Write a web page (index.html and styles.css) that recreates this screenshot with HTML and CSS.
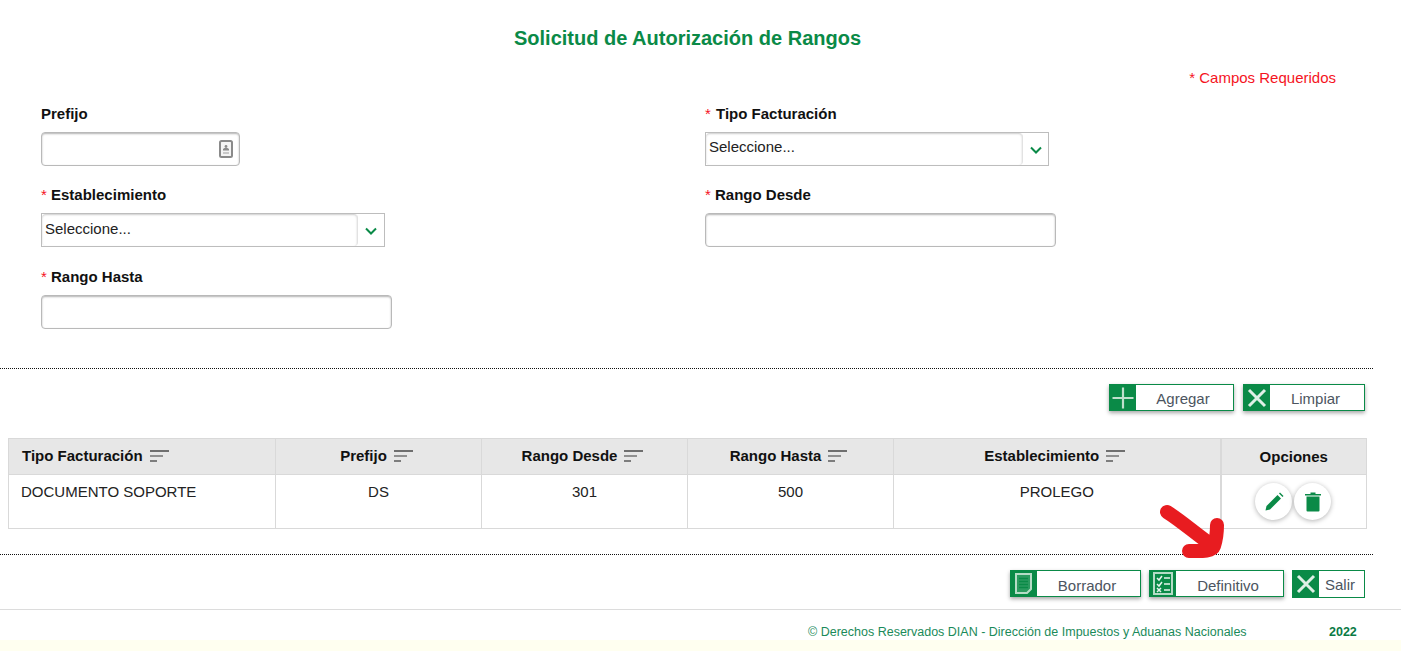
FILE: index.html
```html
<!DOCTYPE html>
<html lang="es">
<head>
<meta charset="utf-8">
<title>Solicitud de Autorización de Rangos</title>
<link rel="stylesheet" href="styles.css">
</head>
<body>
<div class="page">
  <main class="main">
    <h1 class="title">Solicitud de Autorización de Rangos</h1>
    <p class="required">* Campos Requeridos</p>
    <form class="form">
      <div class="col">
        <div class="field">
          <label class="label">Prefijo</label>
          <div class="input input-short">
            <svg class="id-icon" viewBox="0 0 14 18" width="14" height="18"><rect x="1" y="1" width="12" height="16" rx="1.5" fill="#f4f4f4" stroke="#8a8a8a" stroke-width="2"/><circle cx="7" cy="6.500" r="1.400" fill="#8a8a8a"/><path d="M4 10.500h6v-1.500l-1.500-1h-3l-1.500 1z" fill="#8a8a8a"/><path d="M4 13h6" stroke="#bbb" stroke-width="1.500"/></svg>
          </div>
        </div>
        <div class="field field-select">
          <label class="label"><span class="star">*</span> Establecimiento</label>
          <div class="select select-low">
            <span class="select-value">Seleccione...</span>
            <svg class="chev" viewBox="0 0 12 8" width="12" height="8"><path d="M1 1.500l5 5 5-5" fill="none" stroke="#0a8a47" stroke-width="2"/></svg>
          </div>
        </div>
        <div class="field">
          <label class="label"><span class="star">*</span> Rango Hasta</label>
          <div class="input input-wide"></div>
        </div>
      </div>
      <div class="col">
        <div class="field">
          <label class="label"><span class="star star-wide">*</span> Tipo Facturación</label>
          <div class="select">
            <span class="select-value">Seleccione...</span>
            <svg class="chev" viewBox="0 0 12 8" width="12" height="8"><path d="M1 1.500l5 5 5-5" fill="none" stroke="#0a8a47" stroke-width="2"/></svg>
          </div>
        </div>
        <div class="field">
          <label class="label"><span class="star">*</span> Rango Desde</label>
          <div class="input input-wide"></div>
        </div>
      </div>
    </form>

    <div class="rule rule-top"></div>

    <div class="actions actions-top">
      <button class="btn btn-agregar" type="button">
        <span class="btn-icon"><svg viewBox="0 0 26 26" width="26" height="26"><path d="M13 2.500v21M2.500 13h21" stroke="#bfe0cd" stroke-width="2.200"/></svg></span>
        <span class="btn-text">Agregar</span>
      </button>
      <button class="btn btn-limpiar" type="button">
        <span class="btn-icon"><svg viewBox="0 0 26 26" width="26" height="26"><path d="M5 5l16 16M21 5L5 21" stroke="#dff0e6" stroke-width="3"/></svg></span>
        <span class="btn-text">Limpiar</span>
      </button>
    </div>

    <table class="grid">
      <colgroup>
        <col class="c1"><col class="c2"><col class="c3"><col class="c4"><col class="c5"><col class="c6">
      </colgroup>
      <thead>
        <tr>
          <th class="th-left"><span class="th-in">Tipo Facturación <svg class="sort" viewBox="0 0 20 14" width="20" height="14"><path d="M0 2h19" stroke="#6f6f6f" stroke-width="2"/><path d="M0 7h13" stroke="#909090" stroke-width="2"/><path d="M0 12h7" stroke="#7d7d7d" stroke-width="2"/></svg></span></th>
          <th class="th-sort"><span class="th-in">Prefijo <svg class="sort" viewBox="0 0 20 14" width="20" height="14"><path d="M0 2h19" stroke="#6f6f6f" stroke-width="2"/><path d="M0 7h13" stroke="#909090" stroke-width="2"/><path d="M0 12h7" stroke="#7d7d7d" stroke-width="2"/></svg></span></th>
          <th class="th-sort"><span class="th-in">Rango Desde <svg class="sort" viewBox="0 0 20 14" width="20" height="14"><path d="M0 2h19" stroke="#6f6f6f" stroke-width="2"/><path d="M0 7h13" stroke="#909090" stroke-width="2"/><path d="M0 12h7" stroke="#7d7d7d" stroke-width="2"/></svg></span></th>
          <th class="th-sort"><span class="th-in">Rango Hasta <svg class="sort" viewBox="0 0 20 14" width="20" height="14"><path d="M0 2h19" stroke="#6f6f6f" stroke-width="2"/><path d="M0 7h13" stroke="#909090" stroke-width="2"/><path d="M0 12h7" stroke="#7d7d7d" stroke-width="2"/></svg></span></th>
          <th class="th-sort"><span class="th-in">Establecimiento <svg class="sort" viewBox="0 0 20 14" width="20" height="14"><path d="M0 2h19" stroke="#6f6f6f" stroke-width="2"/><path d="M0 7h13" stroke="#909090" stroke-width="2"/><path d="M0 12h7" stroke="#7d7d7d" stroke-width="2"/></svg></span></th>
          <th class="th-opt">Opciones</th>
        </tr>
      </thead>
      <tbody>
        <tr>
          <td class="td-left">DOCUMENTO SOPORTE</td>
          <td>DS</td>
          <td>301</td>
          <td>500</td>
          <td>PROLEGO</td>
          <td class="td-opt">
            <div class="opts">
              <span class="round"><svg viewBox="0 0 20 20" width="20" height="20"><path d="M1.500 18.500l1-4.500L13.500 3l3.500 3.500L6 17.500z" fill="#0a8a47"/><path d="M15 1.500l1-1 3.500 3.500-1 1z" fill="#0a8a47"/></svg></span>
              <span class="round"><svg viewBox="0 0 16 20" width="16" height="20"><path d="M0 2h5.500V.5h5V2H16v1.500H0z" fill="#0a8a47"/><path d="M1.500 4.500h13v14a1 1 0 0 1-1 1h-11a1 1 0 0 1-1-1z" fill="#0a8a47"/></svg></span>
            </div>
          </td>
        </tr>
      </tbody>
    </table>

    <div class="rule rule-bottom"></div>

    <div class="actions actions-bottom">
      <button class="btn btn-low btn-borrador" type="button">
        <span class="btn-icon"><svg viewBox="0 0 26 26" width="26" height="26"><path d="M5 3h15v15l-4 4H5z" fill="#2b9a5f" stroke="#b5dcc6" stroke-width="2"/><path d="M8 7.500h9M8 10.500h9M8 13.500h9M8 16.500h9" stroke="#0a8a47" stroke-width="1.500"/></svg></span>
        <span class="btn-text">Borrador</span>
      </button>
      <button class="btn btn-low btn-definitivo" type="button">
        <span class="btn-icon"><svg viewBox="0 0 26 26" width="26" height="26"><rect x="4" y="2" width="18" height="21" fill="none" stroke="#b5dcc6" stroke-width="2"/><path d="M7 7l2 2 3-4M7 13l2 2 3-4M7 17l4 4M11 17l-4 4" fill="none" stroke="#e6f4ec" stroke-width="1.500"/><path d="M14 7h6M14 13h6M14 19h6" stroke="#e6f4ec" stroke-width="1.500"/></svg></span>
        <span class="btn-text">Definitivo</span>
      </button>
      <button class="btn btn-salir" type="button">
        <span class="btn-icon"><svg viewBox="0 0 26 26" width="26" height="26"><path d="M5 5l16 16M21 5L5 21" stroke="#dff0e6" stroke-width="3"/></svg></span>
        <span class="btn-text">Salir</span>
      </button>
    </div>
  </main>

  <footer class="footer">
    <div class="footer-bar">
      <span class="copy">© Derechos Reservados DIAN - Dirección de Impuestos y Aduanas Nacionales</span>
      <span class="year">2022</span>
    </div>
    <div class="cream"></div>
  </footer>

  <svg class="arrow" viewBox="0 0 70 60" width="70" height="60"><path d="M11 10C24 18 40 32 57 44M61 23C61 32 60 38 58 44C56 50 44 49 33 49" fill="none" stroke="#e81c20" stroke-width="14" stroke-linecap="round" stroke-linejoin="round"/></svg>
</div>
</body>
</html>
```
FILE: styles.css
```css
* { box-sizing: border-box; }
html, body { margin: 0; padding: 0; }
body {
  font-family: "Liberation Sans", Arial, sans-serif;
  font-size: 15px;
  color: #111;
  background: #fff;
  overflow: hidden;
}
.page { position: relative; width: 1401px; height: 651px; display: flex; flex-direction: column; }
.main { width: 1373px; flex: none; height: 609px; }

.title {
  margin: 0;
  padding: 26px 0 0 2px;
  height: 62px;
  text-align: center;
  font-size: 20px;
  line-height: 24px;
  font-weight: bold;
  color: #0a8a47;
}
.required {
  margin: 0;
  height: 43px;
  padding: 7px 37px 0 0;
  text-align: right;
  line-height: 18px;
  font-size: 15px;
  color: #f5141e;
}

.form { display: flex; padding-left: 41px; height: 263px; }
.col { width: 664px; flex: none; }
.field { margin-bottom: 20px; }
.field-select { margin-bottom: 21px; }
.label {
  display: block;
  height: 18px;
  line-height: 18px;
  margin-bottom: 9px;
  font-weight: bold;
  font-size: 15px;
  color: #111;
}
.star { color: #f5141e; font-weight: normal; }
.star-wide { margin-right: 1px; }

.input {
  height: 34px;
  background: #fff;
  border: 1px solid #b9b9b9;
  border-radius: 4px;
  box-shadow: inset 0 1px 2px rgba(0,0,0,.3);
  display: flex;
  align-items: center;
  justify-content: flex-end;
}
.input-short { width: 199px; padding-right: 6px; }
.input-wide { width: 351px; }
.id-icon { display: block; }

.select {
  width: 344px;
  height: 34px;
  border: 1px solid #bdbdbd;
  display: flex;
  align-items: flex-start;
  background: #fff;
}
.select-value {
  width: 317px;
  height: 32px;
  padding-left: 3px;
  line-height: 27px;
  font-size: 15px;
  color: #222;
  border-right: 1px solid #e2e2e2;
  border-radius: 4px;
  box-shadow: inset 0 1px 2px rgba(0,0,0,.2);
}
.select-low .select-value { line-height: 29px; width: 316px; }
.chev { margin: 13px 0 0 7px; }

.rule { height: 1px; border-top: 1px dotted #111; }
.rule-bottom { margin-top: 25px; }

.actions { display: flex; justify-content: flex-end; padding-right: 8px; gap: 8px; }
.actions-top { margin-top: 15px; gap: 9px; }
.actions-bottom { margin-top: 15px; }

.btn {
  display: flex;
  align-items: stretch;
  height: 27px;
  padding: 0;
  background: #fff;
  border: 1px solid #0a8a47;
  box-shadow: 0 2px 4px rgba(0,0,0,.35);
  font-family: inherit;
  font-size: 15px;
  color: #4c5560;
}
.btn-icon { width: 26px; flex: none; background: #0a8a47; display: flex; align-items: center; justify-content: center; }
.btn-text { flex: 1; display: flex; align-items: center; justify-content: center; padding: 2px 3px 0 0; }
.btn-low .btn-text { padding-top: 4px; }
.btn-agregar { width: 125px; }
.btn-limpiar { width: 122px; }
.btn-borrador { width: 131px; }
.btn-definitivo { width: 135px; }
.btn-salir { width: 73px; height: 28px; box-shadow: none; }
.btn-salir .btn-text { padding-top: 1px; }

.grid {
  margin: 27px 0 0 8px;
  width: 1358px;
  height: 90px;
  border-collapse: collapse;
  table-layout: fixed;
}
.c1 { width: 267px; } .c2 { width: 206px; } .c3 { width: 206px; } .c4 { width: 206px; } .c5 { width: 327px; } .c6 { width: 146px; }
.grid th, .grid td { border: 1px solid #d9d9d9; text-align: center; padding: 0; font-size: 15px; }
.grid th {
  height: 36px;
  background: #e7e7e7;
  font-weight: bold;
  color: #111;
}
.th-in { display: inline-flex; align-items: center; gap: 7px; position: relative; top: -1px; }
.sort { display: block; }
.grid .th-left { text-align: left; padding-left: 13px; }
.grid .th-sort { padding-right: 3px; }
.grid .th-opt { border-left-width: 2px; }
.grid td { vertical-align: top; padding-top: 8px; color: #222; height: 54px; }
.grid .td-left { text-align: left; padding-left: 12px; }
.grid .td-opt { padding-top: 8px; border-left-width: 2px; }
.opts { display: flex; justify-content: center; gap: 2px; padding-right: 1px; }
.round {
  width: 37px;
  height: 37px;
  border-radius: 50%;
  background: #fff;
  box-shadow: 0 1px 5px rgba(0,0,0,.3);
  display: flex;
  align-items: center;
  justify-content: center;
}

.footer { flex: 1; display: flex; flex-direction: column; border-top: 1px solid #dcdcdc; }
.footer-bar { height: 30px; padding: 13px 0 0 808px; display: flex; font-size: 12.5px; line-height: 18px; color: #1a8a5a; }
.copy { width: 521px; flex: none; }
.year { font-weight: bold; color: #0a7a45; }
.cream { flex: 1; background: #fffff0; }

.arrow { position: absolute; left: 1156px; top: 502px; }
```
